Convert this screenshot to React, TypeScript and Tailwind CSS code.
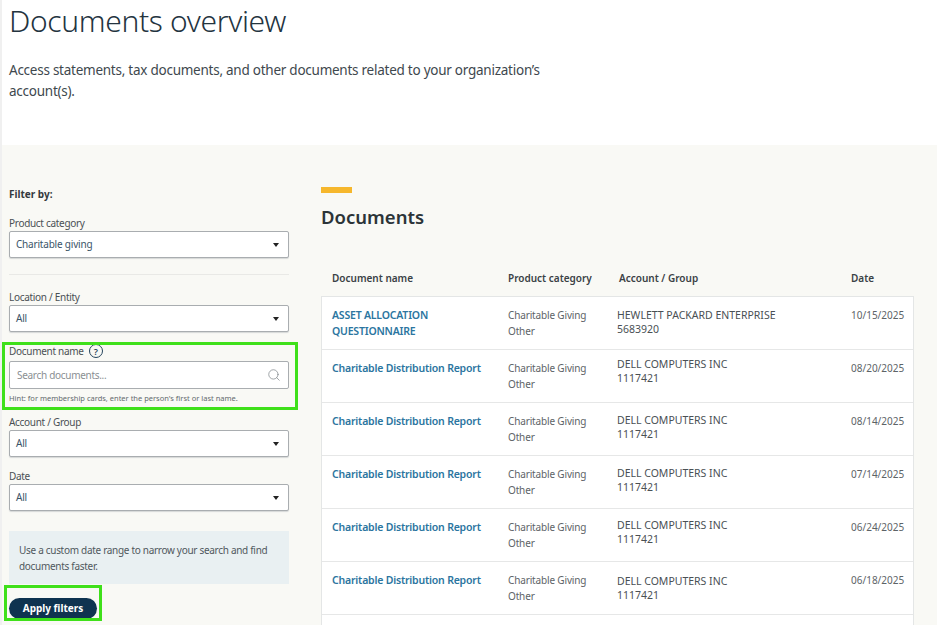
import { Search } from "lucide-react";

const rows = [
  { name: "ASSET ALLOCATION QUESTIONNAIRE", account: "HEWLETT PACKARD ENTERPRISE", id: "5683920", date: "10/15/2025", pad: "pt-[11px]" },
  { name: "Charitable Distribution Report", account: "DELL COMPUTERS INC", id: "1117421", date: "08/20/2025", pad: "pt-[7px]" },
  { name: "Charitable Distribution Report", account: "DELL COMPUTERS INC", id: "1117421", date: "08/14/2025", pad: "pt-[10px]" },
  { name: "Charitable Distribution Report", account: "DELL COMPUTERS INC", id: "1117421", date: "07/14/2025", pad: "pt-[10px]" },
  { name: "Charitable Distribution Report", account: "DELL COMPUTERS INC", id: "1117421", date: "06/24/2025", pad: "pt-[9px]" },
  { name: "Charitable Distribution Report", account: "DELL COMPUTERS INC", id: "1117421", date: "06/18/2025", pad: "pt-[12px]" },
];

function Select({ label, value, className }: { label: string; value: string; className?: string }) {
  return (
    <div className={className}>
      <div className="h-[14px] text-[10px] leading-[14px] tracking-[-0.3px] text-[#4a5054]">{label}</div>
      <div className="mt-[1px] flex h-[27px] items-center justify-between rounded-[2px] border border-[#a9adb0] bg-white pl-[6px] pr-[9px] text-[10px] tracking-[-0.2px] text-[#3a5468] shadow-[0_1px_1px_#d5d7d7]">
        <span>{value}</span>
        <span className="h-0 w-0 border-x-[3.5px] border-t-[4px] border-x-transparent border-t-[#222]" />
      </div>
    </div>
  );
}

export default function App() {
  return (
    <div className="h-[625px] w-[937px] overflow-hidden border-l-2 border-[#f0f0f0] bg-white font-['Noto_Sans',sans-serif]">
      <header className="h-[145px] pl-[7px]">
        <h1 className="pt-[1px] text-[30px] font-light leading-[40px] tracking-[-0.35px] text-[#24343f]">Documents overview</h1>
        <p className="mt-[19px] w-[560px] text-[13.5px] leading-[21px] tracking-[-0.25px] text-[#40484e]">
          Access statements, tax documents, and other documents related to your organization’s account(s).
        </p>
      </header>

      <div className="flex h-[480px] bg-[#f9f9f5]">
        <aside className="w-[287px] shrink-0 pl-[7px]">
          <div className="pt-[42px] text-[10px] font-bold leading-[14px] text-[#33393d]">Filter by:</div>

          <Select label="Product category" value="Charitable giving" className="mt-[15px]" />
          <div className="mt-[16px] h-px bg-[#e9e9e6]" />
          <Select label="Location / Entity" value="All" className="mt-[15px]" />

          <div className="relative mt-[12px]">
            <div className="flex h-[14px] items-center gap-[5px] text-[10px] leading-[14px] tracking-[-0.3px] text-[#4a5054]">
              Document name
              <span className="flex h-[14px] w-[14px] items-center justify-center rounded-full border border-[#24445c] text-[9px] font-semibold leading-none text-[#24445c]">?</span>
            </div>
            <div className="mt-[3px] flex h-[28px] items-center justify-between rounded-[2px] border border-[#a9adb0] bg-white px-[7px] text-[10px] tracking-[-0.3px] text-[#8a8f93]">
              <span>Search documents...</span>
              <Search size={14} strokeWidth={1.25} className="text-[#7d8489]" />
            </div>
            <div className="mt-[3px] text-[7.5px] leading-[12px] text-[#63696d]">
              Hint: for membership cards, enter the person's first or last name.
            </div>
            <div className="absolute -left-[7px] -right-[9px] -top-[2px] h-[68px] border-[3px] border-[#3fe01a]" />
          </div>

          <Select label="Account / Group" value="All" className="mt-[11px]" />
          <Select label="Date" value="All" className="mt-[12px]" />

          <div className="mt-[20px] h-[53px] bg-[#e9f0f2] px-[10px] py-[11px] text-[10px] leading-[16px] tracking-[-0.3px] text-[#50585d]">
            Use a custom date range to narrow your search and find documents faster.
          </div>

          <div className="relative mt-[10px] h-[21px] w-[88px]">
            <button className="h-full w-full rounded-full bg-[#0f3350] text-[10px] font-bold text-white">Apply filters</button>
            <div className="absolute -left-[5px] -top-[9px] h-[36px] w-[98px] border-[3px] border-[#3fe01a]" />
          </div>
        </aside>

        <main className="ml-[32px] w-[593px]">
          <div className="mt-[42px] h-[6px] w-[31px] bg-[#f6b72c]" />
          <h2 className="mt-[11px] text-[18.5px] font-semibold leading-[26px] text-[#2c3438]">Documents</h2>

          <div className="mb-[5px] mt-[35px] flex h-[26px] items-center pl-[11px] text-[10px] font-semibold text-[#3a4145]">
            <div className="w-[176px]">Document name</div>
            <div className="w-[111px]">Product category</div>
            <div className="w-[232px]">Account / Group</div>
            <div>Date</div>
          </div>

          <div className="border-x border-t border-[#e4e6e6] bg-white">
            {rows.map((row) => (
              <div key={row.date} className="flex h-[53px] border-b border-[#e6e7e7] pl-[10px]">
                <div className="w-[176px] pr-[20px] pt-[10px] text-[10.5px] font-semibold leading-[16px] tracking-[-0.2px] text-[#2b75a0]">{row.name}</div>
                <div className="w-[109px] pt-[10px] text-[10px] leading-[16px] tracking-[-0.15px] text-[#5d6367]">
                  Charitable Giving
                  <br />
                  Other
                </div>
                <div className={`w-[234px] text-[10.5px] leading-[14px] text-[#4a5054] ${row.pad}`}>
                  {row.account}
                  <br />
                  {row.id}
                </div>
                <div className="pt-[10px] text-[10px] leading-[16px] text-[#5d6367]">{row.date}</div>
              </div>
            ))}
            <div className="h-[20px]" />
          </div>
        </main>
      </div>
    </div>
  );
}
